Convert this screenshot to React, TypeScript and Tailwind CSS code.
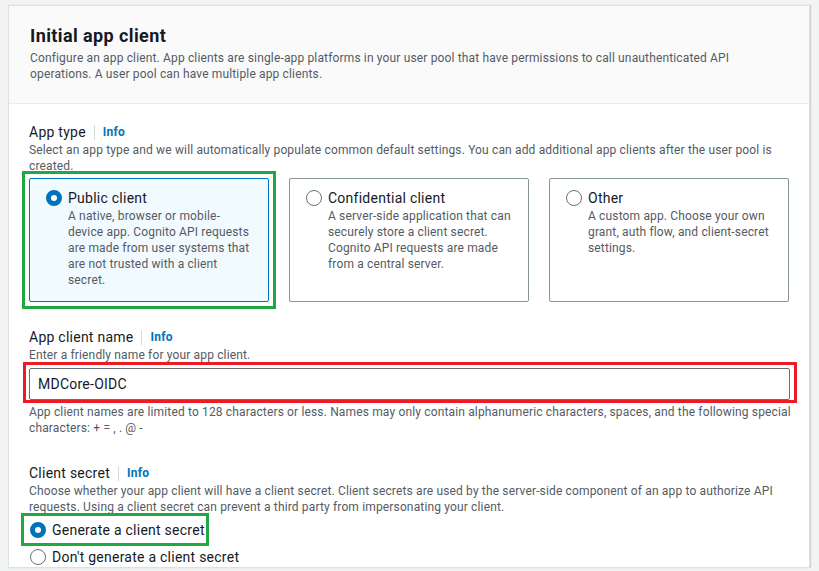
import type { ReactNode } from 'react';

const font = { fontFamily: 'Roboto, "Liberation Sans", sans-serif' };

function Radio({ checked }: { checked?: boolean }) {
  return checked ? (
    <span className="box-border block h-4 w-4 shrink-0 rounded-full border-[5px] border-[#0073bb] bg-white" />
  ) : (
    <span className="box-border block h-4 w-4 shrink-0 rounded-full border-[1.5px] border-[#687078] bg-white" />
  );
}

function FieldLabel({ children }: { children: ReactNode }) {
  return (
    <div className="flex h-5 items-center text-[14px] tracking-[0.25px] text-[#16191f]">
      <span>{children}</span>
      <span className="mx-2 h-[15px] w-px bg-[#d5dbdb]" />
      <span className="text-[12px] font-bold text-[#0073bb]">Info</span>
    </div>
  );
}

function Lines({ lines, className = '' }: { lines: string[]; className?: string }) {
  return (
    <div className={`text-[12px] leading-4 tracking-[0.15px] text-[#545b64] ${className}`}>
      {lines.map((line) => (
        <div key={line} className="whitespace-nowrap">
          {line}
        </div>
      ))}
    </div>
  );
}

interface TileProps {
  title: string;
  lines: string[];
  selected?: boolean;
}

function Tile({ title, lines, selected }: TileProps) {
  return (
    <div
      className={`h-full rounded-[2px] border pb-[13px] pl-4 pr-3 pt-[9px] ${
        selected ? 'border-[#0073bb] bg-[#f1faff]' : 'border-[#879596] bg-white'
      }`}
    >
      <div className="flex h-5 items-center gap-[6px]">
        <Radio checked={selected} />
        <span className="text-[14px] tracking-[0.25px] text-[#16191f]">{title}</span>
      </div>
      <Lines lines={lines} className="pl-[22px]" />
    </div>
  );
}

export default function App() {
  return (
    <div className="h-[571px] overflow-hidden bg-[#f2f3f3] pl-2 pt-[5px]" style={font}>
      <div className="w-[802px] border border-[#dde1e2] bg-white shadow-[1px_0_1px_rgba(0,28,36,0.15)]">
        {/* header */}
        <div className="border-b border-[#eaeded] bg-[#fafafa] px-[21px] pb-[21px] pt-[19px]">
          <h2 className="text-[18px] font-bold leading-[22px] tracking-[0.4px] text-[#16191f]">
            Initial app client
          </h2>
          <Lines
            className="mt-[3px]"
            lines={[
              'Configure an app client. App clients are single-app platforms in your user pool that have permissions to call unauthenticated API',
              'operations. A user pool can have multiple app clients.',
            ]}
          />
        </div>

        {/* body */}
        <div className="pl-[20px] pr-[20px] pt-[18px]">
          <FieldLabel>App type</FieldLabel>
          <Lines
            lines={[
              'Select an app type and we will automatically populate common default settings. You can add additional app clients after the user pool is',
              'created.',
            ]}
          />
          <div className="mt-1 grid grid-cols-[240px_240px_240px] gap-5">
            <div className="relative">
              <div className="pointer-events-none absolute -inset-[7px] border-[3px] border-[#21a843]" />
              <Tile
                selected
                title="Public client"
                lines={[
                  'A native, browser or mobile-',
                  'device app. Cognito API requests',
                  'are made from user systems that',
                  'are not trusted with a client',
                  'secret.',
                ]}
              />
            </div>
            <Tile
              title="Confidential client"
              lines={[
                'A server-side application that can',
                'securely store a client secret.',
                'Cognito API requests are made',
                'from a central server.',
              ]}
            />
            <Tile
              title="Other"
              lines={['A custom app. Choose your own', 'grant, auth flow, and client-secret', 'settings.']}
            />
          </div>

          <div className="mt-[25px]">
            <FieldLabel>App client name</FieldLabel>
            <Lines lines={['Enter a friendly name for your app client.']} />
            <div className="relative mt-[5px] w-[761px]">
              <div className="pointer-events-none absolute -bottom-[3px] -left-[6px] -right-[7px] -top-[6px] border-[3px] border-[#ec1c24]" />
              <div className="relative flex h-8 items-center rounded-[2px] border border-[#687078] bg-white pl-2 text-[14px] tracking-[0.25px] text-[#16191f]">
                MDCore-OIDC
              </div>
            </div>
            <Lines
              className="mt-[4px]"
              lines={[
                'App client names are limited to 128 characters or less. Names may only contain alphanumeric characters, spaces, and the following special',
                'characters: + = , . @ -',
              ]}
            />
          </div>

          <div className="mt-[27px]">
            <FieldLabel>Client secret</FieldLabel>
            <Lines
              lines={[
                'Choose whether your app client will have a client secret. Client secrets are used by the server-side component of an app to authorize API',
                'requests. Using a client secret can prevent a third party from impersonating your client.',
              ]}
            />
            <div className="mt-[5px] flex flex-col gap-[7px]">
              <div className="relative w-fit">
                <div className="pointer-events-none absolute -bottom-[6px] -left-[8px] -right-[4px] -top-[7px] border-[3px] border-[#21a843]" />
                <div className="flex h-5 items-center gap-[6px] pl-[1px]">
                  <Radio checked />
                  <span className="text-[14px] tracking-[0.25px] text-[#16191f]">Generate a client secret</span>
                </div>
              </div>
              <div className="flex h-5 items-center gap-[6px] pl-[1px]">
                <Radio />
                <span className="text-[14px] tracking-[0.25px] text-[#16191f]">Don't generate a client secret</span>
              </div>
            </div>
          </div>
        </div>
      </div>
    </div>
  );
}
